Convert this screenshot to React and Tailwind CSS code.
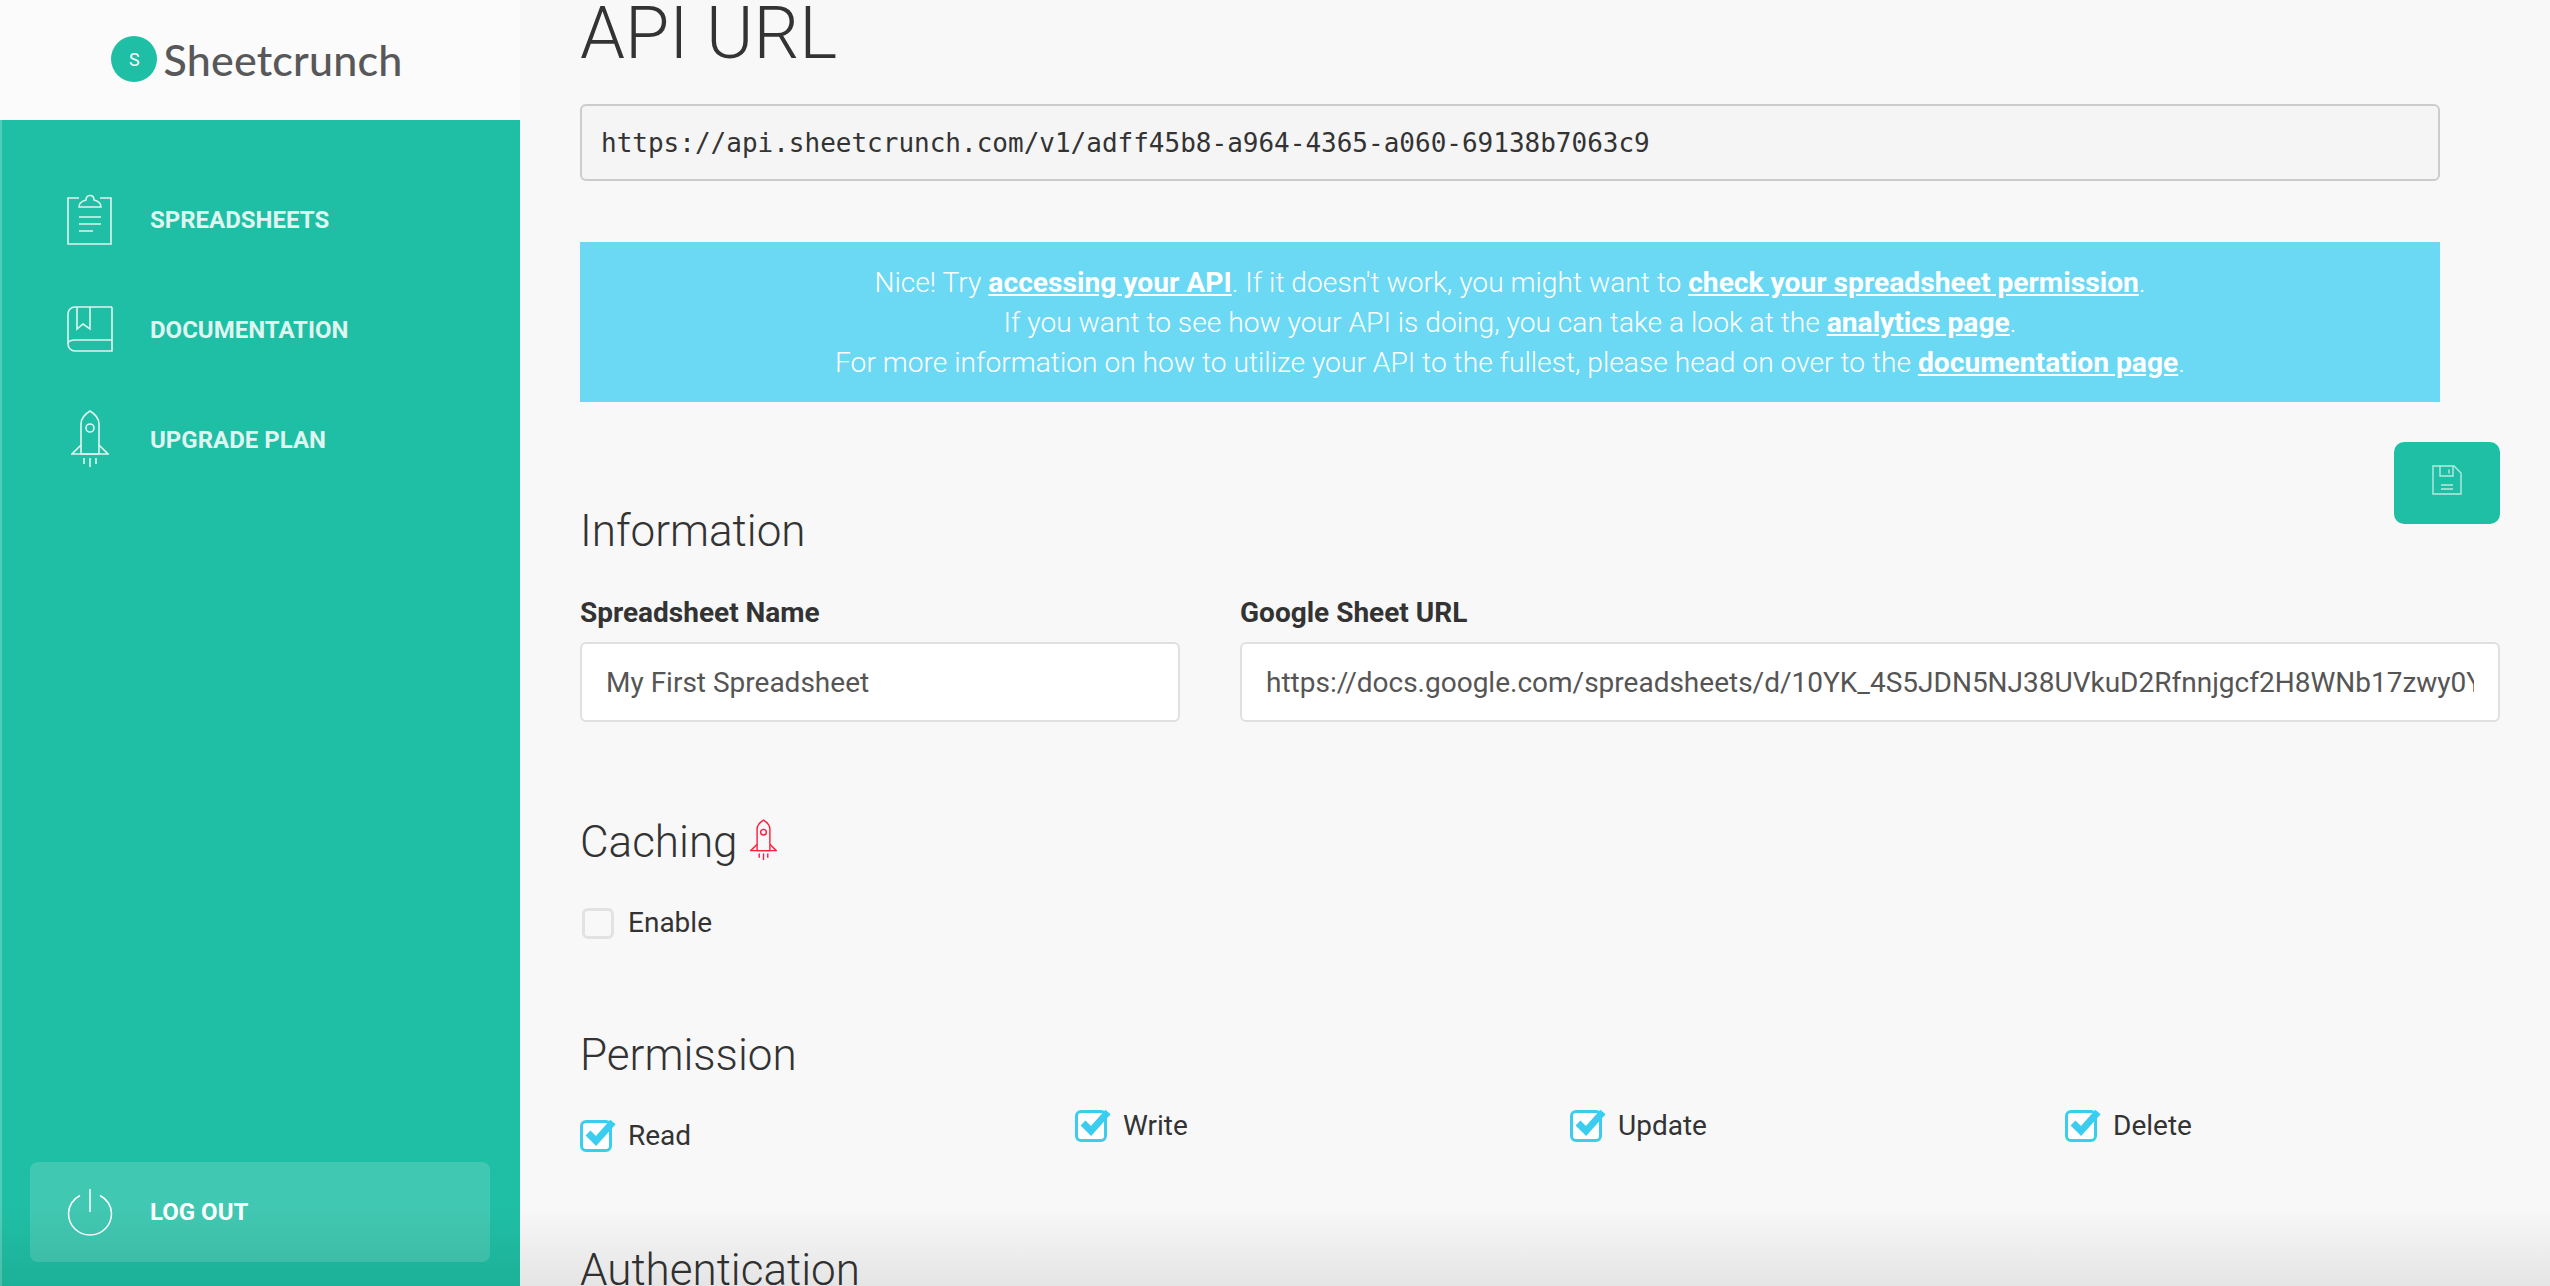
import React from 'react';

const roboto = "font-['Roboto',sans-serif]";

const ClipboardIcon = () => (
    <svg width="46" height="54" viewBox="0 0 46 54" fill="none" stroke="currentColor" strokeWidth="1.6">
        <path d="M12 6H1v46h43V6H33" />
        <path d="M12 15c0-4 3-6 7-7 0-6 8-6 8 0 4 1 7 3 7 7z" />
        <path d="M12 25h22M12 32h22M12 39h14" />
    </svg>
);

const BookIcon = () => (
    <svg width="46" height="46" viewBox="0 0 46 46" fill="none" stroke="currentColor" strokeWidth="1.6">
        <path d="M45 1H8C4 1 1 4 1 8v30c0 4 3 7 7 7h37V34H8c-4 0-7 1-7 4" />
        <path d="M45 1v33" />
        <path d="M10 1v22l6-5 7 5V1" />
    </svg>
);

const RocketIcon = ({ className = '', width = 38, height = 58, strokeWidth = 1.6 }) => (
    <svg width={width} height={height} viewBox="0 0 38 58" fill="none" stroke="currentColor" strokeWidth={strokeWidth} className={className}>
        <path d="M10 44V14C10 9 14 4 19 1c5 3 9 8 9 13v30z" />
        <circle cx="19" cy="18" r="4" />
        <path d="M10 35L1 44h36l-9-9" />
        <path d="M13 48v6M19 48v9M25 48v6" />
    </svg>
);

const SaveIcon = () => (
    <svg width="30" height="30" viewBox="0 0 30 30" fill="none" stroke="currentColor" strokeWidth="1.4">
        <path d="M1 1h21l7 7v21H1z" />
        <path d="M8 1v10h13V1" />
        <path d="M17 4.500v4" />
        <path d="M9 20h12M9 24h12" />
    </svg>
);

const PowerIcon = () => (
    <svg width="46" height="48" viewBox="0 0 46 48" fill="none" stroke="white" strokeWidth="1.500">
        <path d="M13 7.500C6 11 1.500 18 1.500 25.500C1.500 37.500 11 47 23 47s21.500-9.500 21.500-21.500C44.500 18 40 11 33 7.500" />
        <path d="M23 1v23" />
    </svg>
);

const NavItem = ({ icon, label }) => (
    <div className="h-[110px] flex items-center text-[#dff5f0]">
        <div className="w-[84px] ml-[46px] flex justify-center shrink-0">{icon}</div>
        <span className={`${roboto} ml-[18px] pt-[2px] text-[24px] font-bold`}>{label}</span>
    </div>
);

const CheckBox = ({ label, className = '' }) => (
    <div className={`flex items-center ${className}`}>
        <div className="relative w-[37px] h-[32px] shrink-0">
            <div className="absolute left-0 top-0 w-[32px] h-[32px] rounded-[6px] border-[3px] border-[#3bcdf0] bg-white" />
            <svg width="33" height="28" viewBox="0 0 33 28" className="absolute left-[5px] top-[-1px]">
                <path d="M3 14l8 8L28 3" fill="none" stroke="#3bcdf0" strokeWidth="7" />
            </svg>
        </div>
        <span className="ml-[11px] text-[28px] text-[#333]">{label}</span>
    </div>
);

const SectionTitle = ({ children, className = '' }) => (
    <h3 className={`text-[44px] leading-[56px] font-light text-[#333] ${className}`}>{children}</h3>
);

const App = () => {
    return (
        <div className={`${roboto} flex h-[1286px] w-[2550px] overflow-hidden bg-[#f8f8f8] relative`}>
            <aside className="w-[520px] shrink-0 flex flex-col bg-[#1fbfa5]">
                <div className="h-[120px] bg-[#fbfbfb] flex items-center justify-center pr-[6px]">
                    <div className="w-[46px] h-[46px] rounded-full bg-[#1fbfa5] text-white flex items-center justify-center text-[18px] mb-[2px]">S</div>
                    <span className="font-['Lato',sans-serif] font-medium ml-[6px] text-[43px] tracking-[0.2px] text-[#58585a]">Sheetcrunch</span>
                </div>
                <nav className="pt-[44px] flex-1 border-l-2 border-[#4fcdb8]">
                    <NavItem icon={<ClipboardIcon />} label="SPREADSHEETS" />
                    <NavItem icon={<BookIcon />} label="DOCUMENTATION" />
                    <NavItem icon={<RocketIcon />} label="UPGRADE PLAN" />
                </nav>
                <div className="pl-[28px] pr-[30px] pb-[24px] border-l-2 border-[#4fcdb8]">
                    <div className="h-[100px] rounded-[8px] bg-[#41c8b2] flex items-center">
                        <div className="ml-[37px] w-[46px] flex justify-center shrink-0"><PowerIcon /></div>
                        <span className="ml-[37px] text-[24px] font-bold text-white">LOG OUT</span>
                    </div>
                </div>
            </aside>

            <main className="flex-1 pl-[60px] pr-[50px] overflow-hidden">
                <h1 className="text-[72px] leading-[72px] font-light text-[#333] mt-[-2px]">API URL</h1>
                <div className="mt-[34px] w-[1860px] h-[77px] bg-[#f5f5f5] border-2 border-[#cccccc] rounded-[6px] flex items-center pl-[19px] pt-[2px] font-['DejaVu_Sans_Mono',monospace] text-[26px] text-[#333]">
                    https://api.sheetcrunch.com/v1/adff45b8-a964-4365-a060-69138b7063c9
                </div>
                <div className="mt-[61px] w-[1860px] h-[160px] pt-[2px] bg-[#6bd8f4] text-white text-[28.2px] leading-[40px] font-light text-center flex flex-col justify-center">
                    <p>Nice! Try <a className="font-bold underline">accessing your API</a>. If it doesn't work, you might want to <a className="font-bold underline">check your spreadsheet permission</a>.</p>
                    <p>If you want to see how your API is doing, you can take a look at the <a className="font-bold underline">analytics page</a>.</p>
                    <p>For more information on how to utilize your API to the fullest, please head on over to the <a className="font-bold underline">documentation page</a>.</p>
                </div>

                <div className="flex justify-end mt-[40px] h-[82px]">
                    <button className="w-[106px] h-[82px] pb-[6px] rounded-[10px] bg-[#1fbfa5] text-[#b5ebe0] flex items-center justify-center"><SaveIcon /></button>
                </div>

                <SectionTitle className="-mt-[21px]">Information</SectionTitle>
                <div className="grid grid-cols-[600px_1260px] gap-x-[60px] mt-[34px]">
                    <label className="text-[28px] font-bold text-[#333] leading-[40px]">Spreadsheet Name</label>
                    <label className="text-[28px] font-bold text-[#333] leading-[40px]">Google Sheet URL</label>
                    <div className="mt-[9px] h-[80px] bg-white border-2 border-[#e0e0e0] rounded-[6px] flex items-center px-[24px] pt-[1px] text-[28px] text-[#555]">
                        <span className="overflow-hidden whitespace-nowrap">My First Spreadsheet</span>
                    </div>
                    <div className="mt-[9px] h-[80px] bg-white border-2 border-[#e0e0e0] rounded-[6px] flex items-center px-[24px] pt-[1px] text-[28px] text-[#555]">
                        <span className="overflow-hidden whitespace-nowrap">https://docs.google.com/spreadsheets/d/10YK_4S5JDN5NJ38UVkuD2Rfnnjgcf2H8WNb17zwy0Y</span>
                    </div>
                </div>

                <div className="flex items-center mt-[92px] h-[56px]">
                    <SectionTitle>Caching</SectionTitle>
                    <RocketIcon className="ml-[12px] text-[#ff1f3d] mb-[4px]" width={27} height={42} strokeWidth={2} />
                </div>
                <div className="flex items-center mt-[37px] h-[32px] pl-[2px]">
                    <div className="w-[32px] h-[31px] rounded-[6px] border-[3px] border-[#e2e2e2] bg-[#f8f8f8]" />
                    <span className="ml-[14px] text-[28px] text-[#333]">Enable</span>
                </div>

                <SectionTitle className="mt-[88px]">Permission</SectionTitle>
                <div className="grid grid-cols-4 items-start gap-x-[60px] mt-[22px]">
                    <CheckBox label="Read" className="mt-[10px]" />
                    <CheckBox label="Write" />
                    <CheckBox label="Update" />
                    <CheckBox label="Delete" />
                </div>

                <SectionTitle className="mt-[85px]">Authentication</SectionTitle>
            </main>

            <div className="absolute inset-x-0 bottom-0 h-[80px] bg-gradient-to-b from-transparent to-[#00000014] pointer-events-none" />
        </div>
    );
};

export default App;
